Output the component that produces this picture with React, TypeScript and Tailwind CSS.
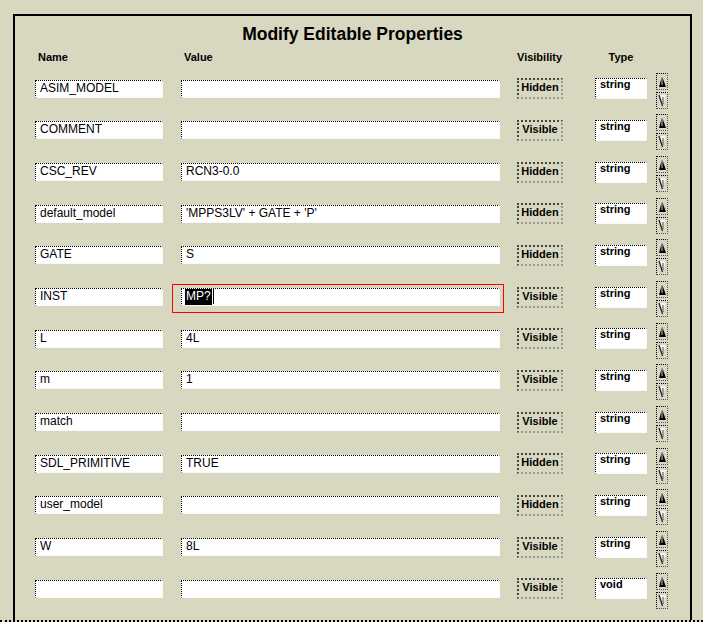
import React from "react";

type Prop = {
  name: string;
  value: string;
  visibility: "Hidden" | "Visible";
  type: string;
  selected?: boolean;
};

const rows: Prop[] = [
  { name: "ASIM_MODEL", value: "", visibility: "Hidden", type: "string" },
  { name: "COMMENT", value: "", visibility: "Visible", type: "string" },
  { name: "CSC_REV", value: "RCN3-0.0", visibility: "Hidden", type: "string" },
  { name: "default_model", value: "'MPPS3LV' + GATE + 'P'", visibility: "Hidden", type: "string" },
  { name: "GATE", value: "S", visibility: "Hidden", type: "string" },
  { name: "INST", value: "MP?", visibility: "Visible", type: "string", selected: true },
  { name: "L", value: "4L", visibility: "Visible", type: "string" },
  { name: "m", value: "1", visibility: "Visible", type: "string" },
  { name: "match", value: "", visibility: "Visible", type: "string" },
  { name: "SDL_PRIMITIVE", value: "TRUE", visibility: "Hidden", type: "string" },
  { name: "user_model", value: "", visibility: "Hidden", type: "string" },
  { name: "W", value: "8L", visibility: "Visible", type: "string" },
  { name: "", value: "", visibility: "Visible", type: "void" },
];

const field =
  "bg-white border border-dotted border-t-black border-l-black border-b-[#f4f4f4] border-r-[#f4f4f4]";

const spinBox =
  "flex h-[17px] items-center justify-center border border-dotted border-t-black border-l-black border-b-[#555] border-r-[#555]";

function Spinner() {
  return (
    <div className="mt-[4px] flex w-[12px] flex-col gap-[2px]">
      <div className={spinBox}>
        <svg width="9" height="13" viewBox="0 0 9 13">
          <polygon points="4,1 8,12 1,12" fill="#000" />
          <line x1="4" y1="1" x2="4" y2="10" stroke="#fff" strokeWidth="0.8" />
        </svg>
      </div>
      <div className={spinBox}>
        <svg width="9" height="13" viewBox="0 0 9 13">
          <polygon points="1,1 8,1 4.5,12" fill="#f4f4f4" />
          <line x1="1" y1="1" x2="4.5" y2="12" stroke="#222" strokeWidth="1.3" />
          <line x1="5" y1="3" x2="5" y2="10" stroke="#222" strokeWidth="0.8" />
        </svg>
      </div>
    </div>
  );
}

function Row({ p }: { p: Prop }) {
  return (
    <div className="flex h-[41.67px] items-center pl-[20px]">
      <div className={`${field} h-[18px] w-[128px] pl-[4px] text-[12px] leading-[14px]`}>{p.name}</div>
      <div className="relative ml-[18px]">
        {p.selected && (
          <span className="absolute -left-[9px] -right-[4px] -top-[4px] -bottom-[7px] border border-[#ff0000]" />
        )}
        <div className={`${field} flex h-[18px] w-[319px] pl-[3px] text-[12px] leading-[14px]`}>
          {p.selected ? (
            <>
              <span className="bg-black px-[1px] leading-[15px] text-white">{p.value}</span>
              <span className="ml-[1px] h-[15px] w-px bg-black" />
            </>
          ) : (
            <span className="pl-px">{p.value}</span>
          )}
        </div>
      </div>
      <button className="ml-[17px] flex h-[21px] w-[46px] items-center justify-center border-2 border-dotted border-t-[#444] border-l-[#444] border-b-[#999] border-r-[#999] pb-[2px] text-[11px] font-bold leading-none">
        {p.visibility}
      </button>
      <div className={`${field} ml-[32px] h-[21px] w-[52px] pl-[4px] text-[11px] font-bold leading-[11px]`}>
        {p.type}
      </div>
      <div className="ml-[9px]">
        <Spinner />
      </div>
    </div>
  );
}

export default function App() {
  return (
    <div
      className="h-[622px] w-[703px] overflow-hidden bg-[#d8d8c0] pt-[14px] text-black"
      style={{ fontFamily: '"Liberation Sans", Arial, sans-serif' }}
    >
      <div className="ml-[13px] h-[606px] w-[679px] border-2 border-b-0 border-black pt-[8px]">
        <div className="text-center text-[17.5px] font-bold leading-[20px]">Modify Editable Properties</div>
        <div className="mt-[6px] flex pl-[20px] text-[11px] font-bold leading-[14px]">
          <div className="w-[128px] pl-[3px]">Name</div>
          <div className="ml-[18px] w-[319px] pl-[3px]">Value</div>
          <div className="ml-[17px] w-[46px]">Visibility</div>
          <div className="ml-[32px] w-[52px] text-center">Type</div>
        </div>
        <div className="mt-[4px]">
          {rows.map((p, i) => (
            <Row key={i} p={p} />
          ))}
        </div>
      </div>
      <div className="h-[2px] w-full border-t-2 border-dotted border-black" />
    </div>
  );
}
